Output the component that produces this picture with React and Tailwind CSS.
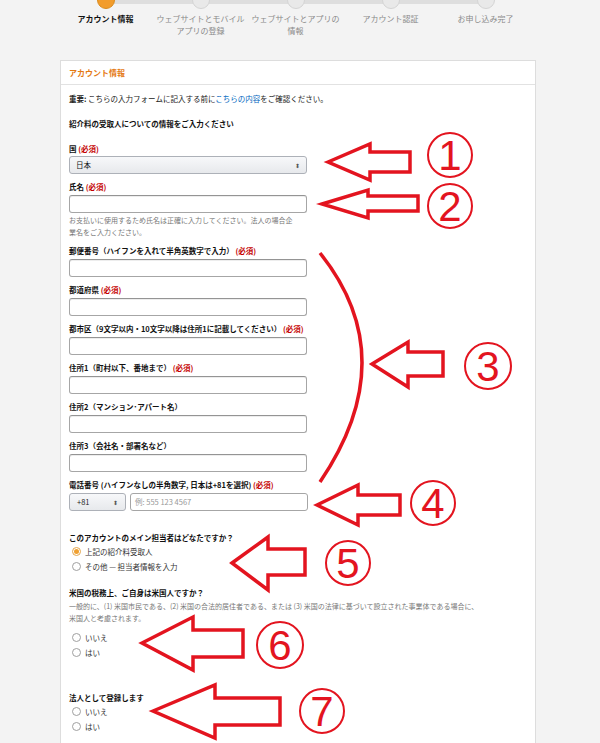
import React from "react";

const steps = [
  { label: "アカウント情報", active: true },
  { label: "ウェブサイトとモバイル\nアプリの登録" },
  { label: "ウェブサイトとアプリの\n情報" },
  { label: "アカウント認証" },
  { label: "お申し込み完了" },
];

const Req = () => <span className="text-[#c40000]"> (必須)</span>;

const TextInput = () => (
  <div className="mt-[2px] h-[18px] w-[238px] rounded-[3px] border border-[#a6a6a6] border-t-[#949494] bg-white shadow-[inset_0_1px_0_rgba(0,0,0,0.07)]"></div>
);

const Field = ({ label, required }) => (
  <div className="mt-[7px]">
    <div className="text-[7.5px] font-bold leading-[12px] text-[#111]">
      {label}
      {required && <Req />}
    </div>
    <TextInput />
  </div>
);

const Radio = ({ label, checked }) => (
  <div className="flex h-[15px] items-center gap-[4px] pl-[3px]">
    <span
      className={
        checked
          ? "flex h-[9px] w-[9px] items-center justify-center rounded-full border border-[#e3a54a] bg-white"
          : "h-[9px] w-[9px] rounded-full border border-[#a0a0a0] bg-white"
      }
    >
      {checked && <span className="h-[5px] w-[5px] rounded-full bg-[#f0a030]"></span>}
    </span>
    <span className="text-[7.5px] text-[#333]">{label}</span>
  </div>
);

const Arrow = ({ tip, head, top, bottom, s1, s2, tail }) => (
  <polygon
    points={`${tip[0]},${tip[1]} ${head},${top} ${head},${s1} ${tail},${s1} ${tail},${s2} ${head},${s2} ${head},${bottom}`}
    fill="none"
    stroke="#e3141f"
    strokeWidth="3.5"
    strokeLinejoin="miter"
  />
);

const Num = ({ x, y, n, r = 22 }) => (
  <g>
    <circle cx={x} cy={y} r={r} fill="none" stroke="#e3141f" strokeWidth="2" />
    <text
      x={x}
      y={y + 15}
      textAnchor="middle"
      fontSize="42"
      fill="#e3141f"
      fontFamily="'Liberation Sans', sans-serif"
    >
      {n}
    </text>
  </g>
);

export default function App() {
  return (
    <div
      className="relative h-[743px] w-[600px] overflow-hidden bg-[#f3f3f3]"
      style={{ fontFamily: "'Noto Sans CJK JP', 'Noto Sans', sans-serif" }}
    >
      {/* progress steps */}
      <div className="relative ml-[58px] grid w-[475px] grid-cols-5">
        <div className="absolute left-[47px] right-[47px] top-0 h-[4px] bg-[#dedede]"></div>
        {steps.map((s, i) => (
          <div key={i} className="relative flex flex-col items-center">
            <div
              className={
                s.active
                  ? "-mt-[9px] h-[18px] w-[18px] rounded-full border border-[#d98a1c] bg-[#f29c2b]"
                  : "-mt-[9px] h-[18px] w-[18px] rounded-full border border-[#d4d4d4] bg-[#e9e9e9]"
              }
            ></div>
            <div
              className={
                s.active
                  ? "mt-[4px] whitespace-pre text-center text-[8px] font-bold leading-[12px] text-[#111]"
                  : "mt-[4px] whitespace-pre text-center text-[8px] leading-[12px] text-[#8a8a8a]"
              }
            >
              {s.label}
            </div>
          </div>
        ))}
      </div>

      {/* card */}
      <div className="ml-[60px] mt-[23px] h-[700px] w-[476px] border border-[#dddddd] bg-white">
        <div className="flex h-[24px] items-center border-b border-[#e2e2e2] px-[8px] text-[8px] font-bold text-[#e47911]">
          アカウント情報
        </div>
        <div className="px-[8px] pt-[8px]">
          <div className="text-[7.5px] leading-[12px] text-[#222]">
            <span className="font-bold">重要:</span> こちらの入力フォームに記入する前に
            <span className="text-[#0066c0]">こちらの内容</span>をご確認ください。
          </div>
          <div className="mt-[13px] text-[7.5px] font-bold leading-[12px] text-[#111]">
            紹介料の受取人についての情報をご入力ください
          </div>

          <div className="mt-[13px] text-[7.5px] font-bold leading-[12px] text-[#111]">
            国<Req />
          </div>
          <div className="mt-[1px] flex h-[18px] w-[238px] items-center justify-between rounded-[3px] border border-[#adb1b8] bg-gradient-to-b from-[#f7f8fa] to-[#e7e9ec] px-[6px] text-[7.5px] text-[#111]">
            <span>日本</span>
            <span className="text-[6px] text-[#555]">⬍</span>
          </div>

          <div className="mt-[7px] text-[7.5px] font-bold leading-[12px] text-[#111]">
            氏名<Req />
          </div>
          <TextInput />
          <div className="mt-[1px] text-[7px] leading-[12px] text-[#777]">
            お支払いに使用するため氏名は正確に入力してください。法人の場合企
            <br />
            業名をご入力ください。
          </div>

          <div className="mt-[2px]">
            <Field label="郵便番号（ハイフンを入れて半角英数字で入力）" required />
            <Field label="都道府県" required />
            <Field label="都市区（9文字以内・10文字以降は住所1に記載してください）" required />
            <Field label="住所1（町村以下、番地まで）" required />
            <Field label="住所2（マンション･アパート名）" />
            <Field label="住所3（会社名・部署名など）" />
            <div className="mt-[7px]">
              <div className="text-[7.5px] font-bold leading-[12px] text-[#111]">
                電話番号 (ハイフンなしの半角数字, 日本は+81を選択)
                <Req />
              </div>
              <div className="mt-[2px] flex gap-[4px]">
                <div className="flex h-[18px] w-[57px] items-center justify-between rounded-[3px] border border-[#adb1b8] bg-gradient-to-b from-[#f7f8fa] to-[#e7e9ec] px-[7px] text-[7.5px] text-[#222]">
                  <span>+81</span>
                  <span className="text-[6px] text-[#555]">⬍</span>
                </div>
                <div className="flex h-[18px] w-[178px] items-center rounded-[3px] border border-[#a6a6a6] bg-white px-[4px] text-[7.5px] text-[#999]">
                  例: 555 123 4567
                </div>
              </div>
            </div>
          </div>

          <div className="mt-[21px] text-[7.5px] font-bold leading-[12px] text-[#111]">
            このアカウントのメイン担当者はどなたですか？
          </div>
          <Radio label="上記の紹介料受取人" checked />
          <Radio label="その他 — 担当者情報を入力" />

          <div className="mt-[13px] text-[7.5px] font-bold leading-[12px] text-[#111]">
            米国の税務上、ご自身は米国人ですか？
          </div>
          <div className="mt-[1px] whitespace-nowrap text-[7px] leading-[12px] text-[#777]">
            一般的に、(1) 米国市民である、(2) 米国の合法的居住者である、または (3) 米国の法律に基づいて設立された事業体である場合に、
            <br />
            米国人と考慮されます。
          </div>
          <div className="mt-[6px]">
            <Radio label="いいえ" />
            <Radio label="はい" />
          </div>

          <div className="mt-[32px] text-[7.5px] font-bold leading-[12px] text-[#111]">
            法人として登録します
          </div>
          <Radio label="いいえ" />
          <Radio label="はい" />
        </div>
      </div>

      {/* annotations */}
      <svg className="pointer-events-none absolute left-0 top-0" width="600" height="743">
        <Arrow tip={[328, 162]} head={370} top={144} bottom={180} s1={152} s2={172} tail={410} />
        <Arrow tip={[322, 204]} head={368} top={190} bottom={218} s1={196} s2={211} tail={418} />
        <path d="M320,253 Q404,358 320,482" fill="none" stroke="#e3141f" strokeWidth="3.5" />
        <Arrow tip={[372, 364]} head={408} top={342} bottom={387} s1={352} s2={376} tail={443} />
        <Arrow tip={[317, 505]} head={358} top={485} bottom={525} s1={495} s2={515} tail={400} />
        <Arrow tip={[232, 563]} head={268} top={537} bottom={590} s1={549} s2={575} tail={305} />
        <Arrow tip={[142, 643]} head={193} top={617} bottom={670} s1={630} s2={657} tail={243} />
        <Arrow tip={[153, 711]} head={215} top={685} bottom={738} s1={698} s2={725} tail={280} />
        <Num x={450} y={155} n="1" />
        <Num x={450} y={206} n="2" />
        <Num x={488} y={366} n="3" r={23} />
        <Num x={433} y={503} n="4" />
        <Num x={348} y={563} n="5" />
        <Num x={280} y={645} n="6" r={23} />
        <Num x={322} y={711} n="7" />
      </svg>
    </div>
  );
}
